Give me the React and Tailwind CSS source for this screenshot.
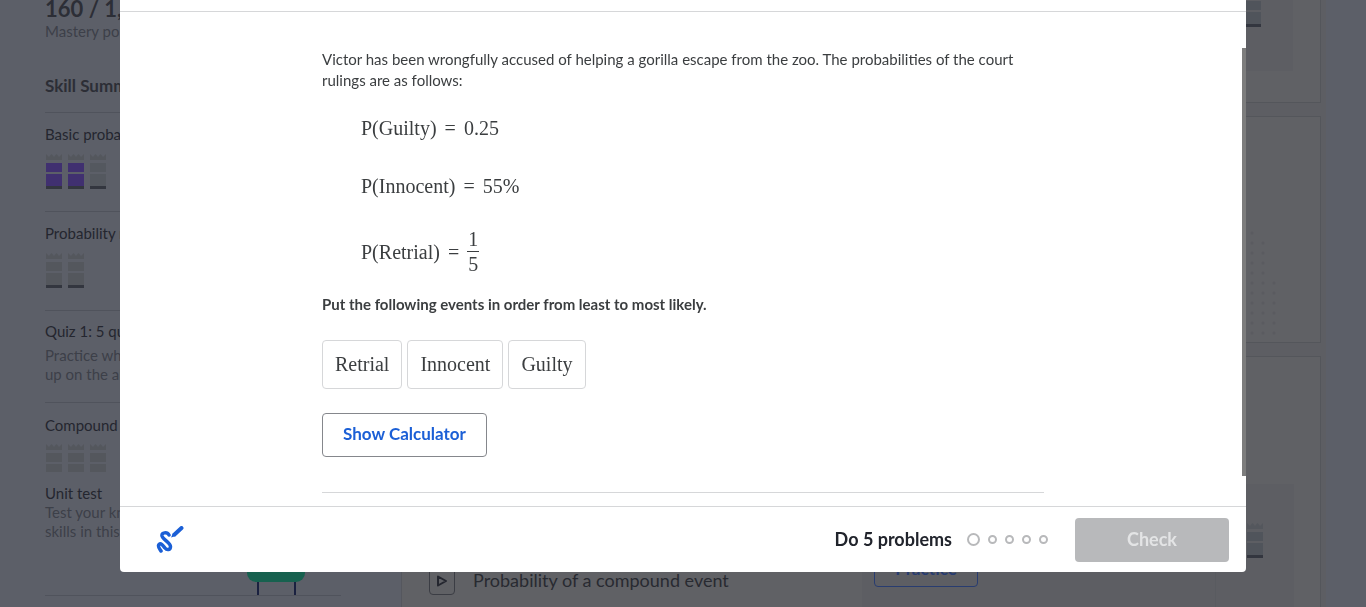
import React from 'react';

const skills = [
  { title: 'Basic probability', levels: ['bg-[#403070]', 'bg-[#403070]', 'bg-[#54585f]'] },
  { title: 'Probability models', levels: ['bg-[#54575d]', 'bg-[#54575d]'] },
];

const dotColumns = [11, 10, 6];

function Tower({ color = 'bg-[#54575d]', base = true }) {
  return (
    <span className="flex w-4 flex-col">
      <svg viewBox="0 0 16 7" className="h-[7px] w-4 fill-[#54575d]" aria-hidden="true">
        <path d="M0 0 L3 3 L5.500 0 L8 3 L10.500 0 L13 3 L16 0 V6 H0 Z" />
      </svg>
      <span className={`mt-0.5 h-[9px] ${color}`} />
      <span className={`mt-0.5 ${color} ${base ? 'h-3' : 'h-2'}`} />
      {base && <span className="h-[3px] bg-[#33363f]" />}
    </span>
  );
}

function Sidebar() {
  return (
    <aside className="w-[402px] shrink-0 border-r border-[#55575e] bg-[#5c5f68] pl-[45px] text-[15px] leading-[19px] text-[#24262f]">
      <p className="mb-1 text-[22px] leading-[18px] font-bold text-[#2c2e36]">160 / 1,600</p>
      <p className="text-[#3d4049]">Mastery points</p>
      <h2 className="mt-[35px] mb-4 text-[17px] leading-5 font-bold text-[#2c2e36]">Skill Summary</h2>
      {skills.map((skill) => (
        <section key={skill.title} className="mr-[60px] h-[99px] border-t border-[#50535c] pt-3">
          <h3>{skill.title}</h3>
          <div className="mt-[10px] ml-px flex gap-1.5">
            {skill.levels.map((color, i) => (
              <Tower key={i} color={color} />
            ))}
          </div>
        </section>
      ))}
      <section className="mr-[60px] h-[92px] border-t border-[#50535c] pt-[11px]">
        <h3>Quiz 1: 5 questions</h3>
        <p className="mt-[5px] w-[260px] text-[#3d4049]">Practice what you’ve learned, and level up on the above skills</p>
      </section>
      <section className="mr-[60px] border-t border-[#50535c] pt-[13px]">
        <h3>Compound events</h3>
        <div className="mt-[9px] ml-px flex gap-1.5">
          <Tower base={false} />
          <Tower base={false} />
          <Tower base={false} />
        </div>
        <h3 className="mt-3">Unit test</h3>
        <p className="w-[190px] text-[#3d4049]">Test your knowledge of all skills in this unit</p>
        <div className="flex h-[55px] items-end justify-end border-b border-[#50535c] pr-9">
          <svg viewBox="0 0 58 40" className="h-10 w-[58px]" aria-hidden="true">
            <path d="M11 24V40M48 24V40" stroke="#1a2140" strokeWidth="2" />
            <rect width="58" height="27" rx="9" fill="#17614f" />
          </svg>
        </div>
      </section>
    </aside>
  );
}

function Lessons() {
  return (
    <main className="flex min-w-0 flex-1 flex-col bg-[#5d5e63] pr-[5px]">
      <section className="flex h-[103px] shrink-0 justify-end border-r border-b border-[#54565b] bg-[#606165] pr-[27px]">
        <div className="flex h-[71px] w-20 justify-center bg-[#5d5e63]">
          <div className="-mt-2">
            <Tower color="bg-[#50545b]" />
          </div>
        </div>
      </section>
      <section className="mt-[13px] flex h-[227px] shrink-0 items-end justify-end border border-[#54565b] bg-[#606165] pr-[43px] pb-1.5">
        <svg viewBox="0 0 36 112" className="h-28 w-9 fill-[#5a5b60]" aria-hidden="true">
          {dotColumns.map((count, col) =>
            Array.from({ length: count }, (_, i) => (
              <circle key={`${col}-${i}`} cx={11 + col * 11} cy={109 - i * 10} r="1.500" />
            ))
          )}
        </svg>
      </section>
      <section className="mt-[13px] flex min-h-0 flex-1 items-end border-t border-r border-[#54565b] bg-[#606165] pr-[26px] pl-[27px]">
        <div className="mb-3 flex h-7 w-[26px] items-center justify-center rounded-sm border border-[#3b3d44]">
          <svg viewBox="0 0 12 12" className="size-3" fill="none" stroke="#24262f" strokeWidth="2" aria-hidden="true">
            <path d="M2 1.500 L10 6 L2 10.500 Z" strokeLinejoin="round" />
          </svg>
        </div>
        <a href="#" className="mb-4 ml-[18px] text-lg leading-[22px] text-[#282a31]">Probability of a compound event</a>
        <div className="ml-auto flex h-[123px] items-end bg-[#5d5e63] pl-3">
          <button className="mb-5 h-9 w-[104px] rounded border border-[#283c70] text-[17px] font-bold text-[#283c70]">Practice</button>
          <div className="ml-[237px] flex h-[123px] w-[79px] justify-center border-l border-[#595b60] pt-[39px]">
            <Tower color="bg-[#50545b]" />
          </div>
        </div>
      </section>
    </main>
  );
}

function Equation({ event, children }) {
  return (
    <p className="flex items-center gap-2 font-['Liberation_Serif',serif] text-xl leading-6 text-[#3b3e40]">
      <span>P({event})</span>
      <span>=</span>
      {children}
    </p>
  );
}

function Scribble() {
  return (
    <svg viewBox="0 0 28 28" className="size-7" fill="none" stroke="#1b5fd6" strokeLinecap="round" strokeLinejoin="round" aria-hidden="true">
      <path d="M18.500 8.500 L25.500 2" strokeWidth="4" />
      <path d="M15 11.500 L17 7 L20 10 Z" fill="#1b5fd6" stroke="none" />
      <path d="M13 9 C11 5.500 5.500 6.500 6 10 C6.500 13 14.500 17 14.500 20.500 C14.500 24 11 24.500 9 22 C7 19.500 5 16.500 3 18.500 C1.200 20.500 3.800 23 5 25" strokeWidth="3.500" />
    </svg>
  );
}

function ExerciseModal() {
  return (
    <div role="dialog" aria-label="Exercise" className="fixed inset-x-[120px] top-0 bottom-[35px] flex flex-col overflow-hidden rounded-b bg-white text-[#3b3e40]">
      <header className="h-3 shrink-0 border-b border-[#d6d7d9]" />
      <div className="flex min-h-0 flex-1">
        <div className="min-w-0 flex-1 pl-1">
          <div className="mx-auto max-w-[722px] pt-[37px] text-[15px] leading-[21px]">
            <p>
              Victor has been wrongfully accused of helping a gorilla escape from the zoo. The probabilities of the court rulings are as follows:
            </p>
            <div className="mt-[25px] ml-[39px] flex flex-col">
              <Equation event="Guilty">
                <span>0.25</span>
              </Equation>
              <div className="mt-[34px]">
                <Equation event="Innocent">
                  <span>55%</span>
                </Equation>
              </div>
              <div className="mt-[29px]">
                <Equation event="Retrial">
                  <span className="flex flex-col text-center">
                    <span className="border-b border-[#3b3e40] px-px">1</span>
                    <span>5</span>
                  </span>
                </Equation>
              </div>
            </div>
            <p className="mt-[18px] font-bold">Put the following events in order from least to most likely.</p>
            <ul className="mt-[25px] flex gap-[5px] font-['Liberation_Serif',serif] text-xl">
              {['Retrial', 'Innocent', 'Guilty'].map((label) => (
                <li key={label} className="flex h-[49px] items-center rounded border border-[#d6d7d9] px-3 pb-0.5">
                  {label}
                </li>
              ))}
            </ul>
            <button className="mt-6 h-11 w-[165px] rounded border border-[#85878c] pb-1 text-[17px] font-bold text-[#1b5fd6]">
              Show Calculator
            </button>
            <hr className="mt-[35px] border-[#d6d7d9]" />
          </div>
        </div>
        <div className="mt-9 mb-[30px] w-1 shrink-0 bg-[#7d7d7d]" />
      </div>
      <footer className="flex h-[66px] shrink-0 items-center border-t border-[#d6d7d9] pr-[17px] pl-9">
        <button aria-label="Draw on the exercise">
          <Scribble />
        </button>
        <strong className="ml-auto pb-0.5 text-lg text-[#21242c]">Do 5 problems</strong>
        <div className="mr-[27px] ml-[15px] flex items-center gap-2">
          <span className="size-[13px] rounded-full border-2 border-[#b8b9bb]" />
          {[1, 2, 3, 4].map((n) => (
            <span key={n} className="size-[9px] rounded-full border-2 border-[#b8b9bb]" />
          ))}
        </div>
        <button disabled className="h-11 w-[154px] rounded bg-[#b8b9bb] pb-0.5 text-lg font-bold text-[#e3e4e5]">
          Check
        </button>
      </footer>
    </div>
  );
}

export default function App() {
  return (
    <div className="flex h-screen overflow-hidden bg-[#5c5f68] font-[Lato,sans-serif]">
      <Sidebar />
      <Lessons />
      <div className="w-10 shrink-0" />
      <ExerciseModal />
    </div>
  );
}
